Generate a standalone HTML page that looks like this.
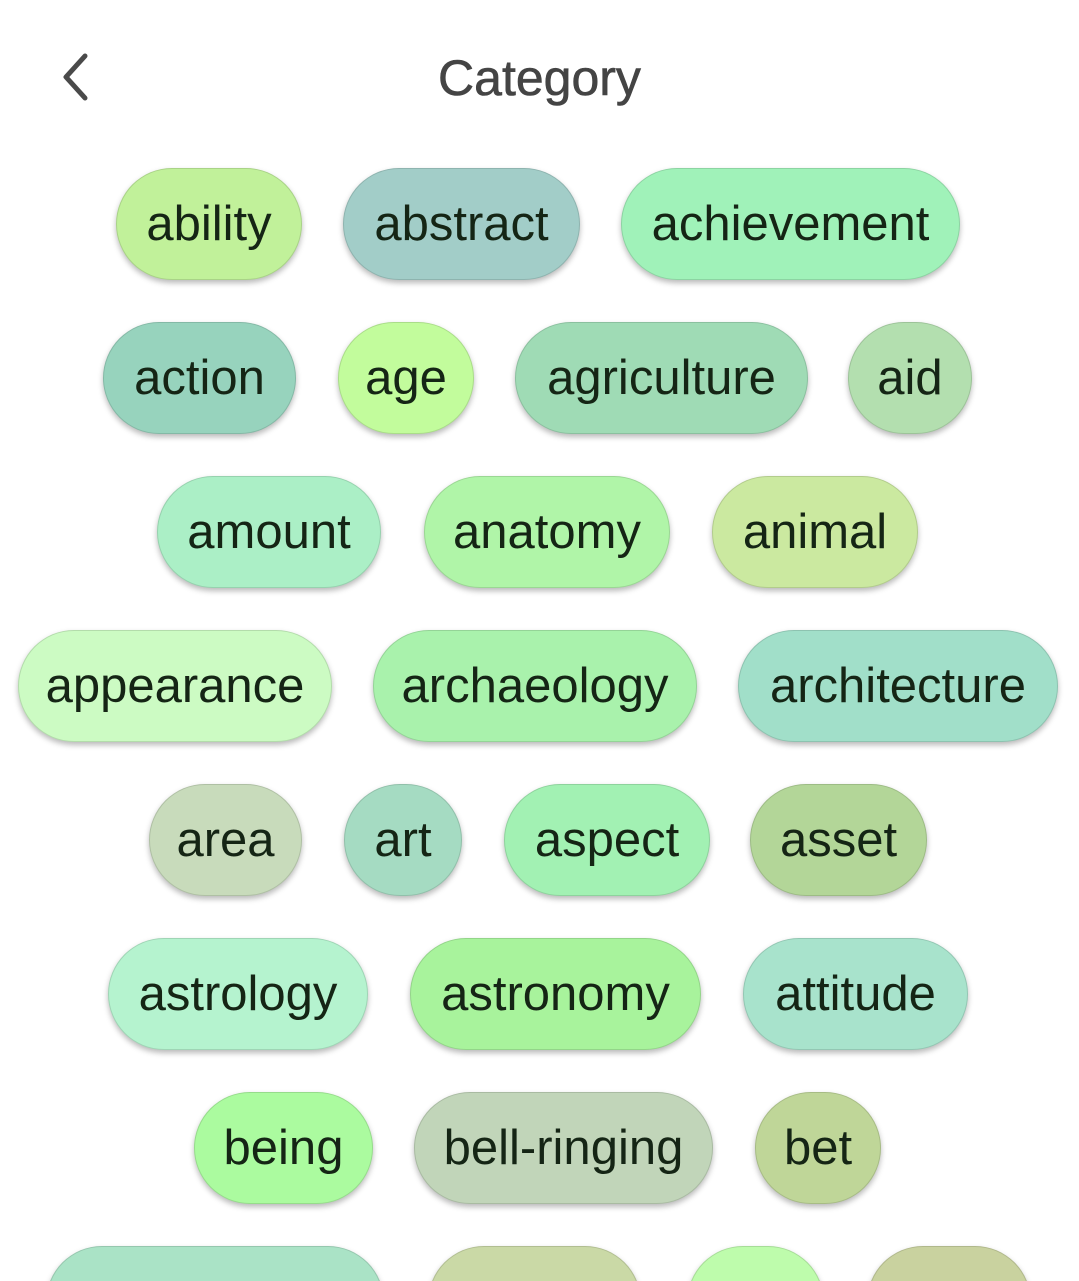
<!DOCTYPE html>
<html><head><meta charset="utf-8"><style>
html,body{margin:0;width:1079px;height:1281px;background:#fff;overflow:hidden;}
body{position:relative;font-family:"Liberation Sans",sans-serif;}
#w{position:absolute;left:0;top:0;width:1079px;height:1281px;overflow:hidden;}
.t{position:absolute;left:0;width:1079px;top:50px;text-align:center;font-size:50px;color:#444;line-height:56px;-webkit-text-stroke:0.6px #444;}
.c{position:absolute;height:112px;border-radius:56px;box-sizing:border-box;border:1px solid rgba(0,0,0,0.12);box-shadow:0 3px 6px rgba(0,0,0,0.28);text-align:center;line-height:110px;font-size:49px;color:#152515;white-space:nowrap;}
#b{position:absolute;left:0;top:1238px;width:1079px;height:43px;overflow:hidden;}
</style></head><body><div id="w">
<svg style="position:absolute;left:58px;top:52px" width="36" height="50" viewBox="0 0 36 50"><path d="M27 4 L8 25 L27 46" fill="none" stroke="#4a4a4a" stroke-width="5" stroke-linecap="round" stroke-linejoin="round"/></svg>
<div class="t">Category</div>

<div class="c" style="left:116px;top:168px;width:186px;background:#c1f19a">ability</div>
<div class="c" style="left:343px;top:168px;width:237px;background:#a2cdc8">abstract</div>
<div class="c" style="left:621px;top:168px;width:339px;background:#a0f2b9">achievement</div>

<div class="c" style="left:103px;top:322px;width:193px;background:#97d3bd">action</div>
<div class="c" style="left:338px;top:322px;width:136px;background:#c2fc9c">age</div>
<div class="c" style="left:515px;top:322px;width:293px;background:#9fdbb5">agriculture</div>
<div class="c" style="left:848px;top:322px;width:124px;background:#b3dfaf">aid</div>

<div class="c" style="left:157px;top:476px;width:224px;background:#abefc6">amount</div>
<div class="c" style="left:424px;top:476px;width:246px;background:#b0f5a8">anatomy</div>
<div class="c" style="left:712px;top:476px;width:206px;background:#cbe9a0">animal</div>

<div class="c" style="left:18px;top:630px;width:314px;background:#ccfbc3">appearance</div>
<div class="c" style="left:373px;top:630px;width:324px;background:#a9f2ac">archaeology</div>
<div class="c" style="left:738px;top:630px;width:320px;background:#a1dfc9">architecture</div>

<div class="c" style="left:149px;top:784px;width:153px;background:#c8dbbb">area</div>
<div class="c" style="left:344px;top:784px;width:118px;background:#a5dbc2">art</div>
<div class="c" style="left:504px;top:784px;width:206px;background:#a2f1b3">aspect</div>
<div class="c" style="left:750px;top:784px;width:177px;background:#b3d698">asset</div>

<div class="c" style="left:108px;top:938px;width:260px;background:#b5f3cf">astrology</div>
<div class="c" style="left:410px;top:938px;width:291px;background:#a8f39c">astronomy</div>
<div class="c" style="left:743px;top:938px;width:225px;background:#a8e3cc">attitude</div>

<div class="c" style="left:194px;top:1092px;width:179px;background:#abfb9f">being</div>
<div class="c" style="left:414px;top:1092px;width:299px;background:#c1d5b9">bell-ringing</div>
<div class="c" style="left:755px;top:1092px;width:126px;background:#bfd698">bet</div>

<div id="b">
<div class="c" style="left:46px;top:8px;width:338px;background:#aae3c6"></div>
<div class="c" style="left:428px;top:8px;width:213px;background:#cad9a6"></div>
<div class="c" style="left:687px;top:8px;width:137px;background:#befcac"></div>
<div class="c" style="left:867px;top:8px;width:164px;background:#c9d29f"></div>
</div>
</div></body></html>
